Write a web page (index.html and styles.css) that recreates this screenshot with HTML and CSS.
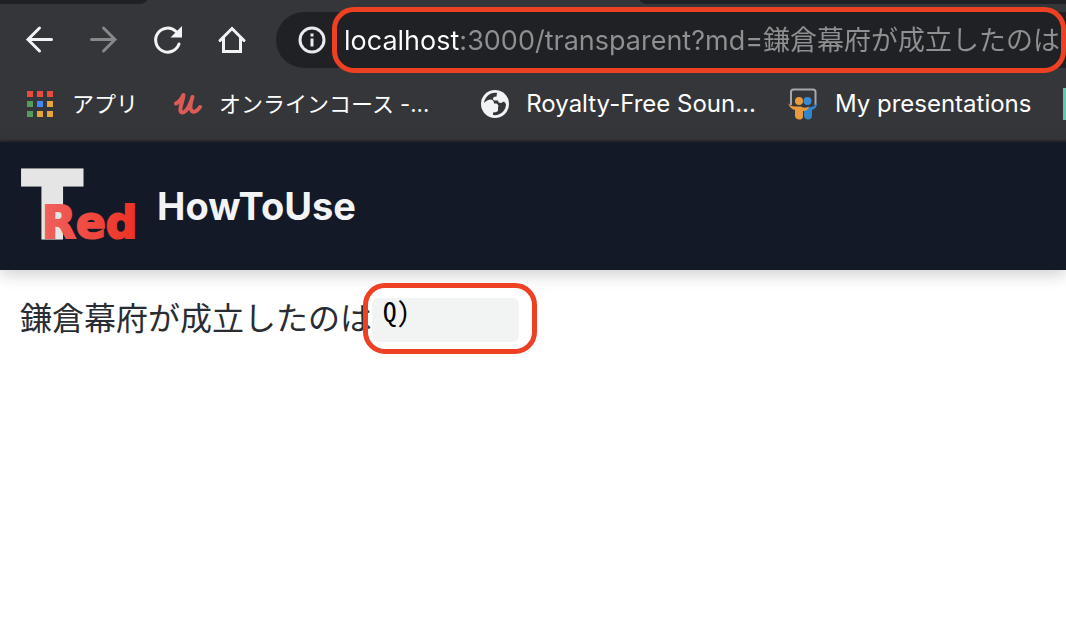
FILE: index.html
```html
<!DOCTYPE html>
<html lang="ja">
<head>
<meta charset="utf-8">
<title>HowToUse</title>
<link rel="stylesheet" href="styles.css">
</head>
<body>
<div class="browser">
  <div class="tabs"><span class="tab tab-left"></span><span class="tab tab-right"></span></div>
  <div class="toolbar">
    <button class="tool" aria-label="Back"><svg class="icon" viewBox="0 0 28 28"><path d="M25.500 13.500H2M13.500 2 2 13.500 13.500 25"/></svg></button>
    <button class="tool dim" aria-label="Forward"><svg class="icon" viewBox="0 0 28 28"><path d="M1.500 13.500H25M13.500 2 25 13.500 13.500 25"/></svg></button>
    <button class="tool" aria-label="Reload"><svg class="icon" viewBox="0 0 28 28"><path d="M25 18A12 12 0 1 1 22 5.500"/><path class="solid" d="M28 0V11.500H16.500Z"/></svg></button>
    <button class="tool" aria-label="Home"><svg class="icon" viewBox="0 0 28 28"><path d="M2 14.500 14 2.500 26 14.500M5.500 12V25.500H22.500V12"/></svg></button>
    <div class="address">
      <svg class="icon info" viewBox="0 0 28 28"><circle cx="14" cy="14" r="12"/><path class="solid" d="M12.500 7.500h3v3h-3zM12.500 12.500h3v8h-3z"/></svg>
      <div class="field marked">
        <input class="url" type="text" aria-label="Address" value="localhost:3000/transparent?md=鎌倉幕府が成立したのは">
      </div>
    </div>
  </div>
  <nav class="bookmarks">
    <a class="bookmark apps-link" href="#">
      <span class="apps"><i class="red"></i><i class="red"></i><i class="red"></i><i class="green"></i><i class="blue"></i><i class="amber"></i><i class="green"></i><i class="amber"></i><i class="amber"></i></span>アプリ</a>
    <a class="bookmark course-link" href="#">
      <svg class="favicon" viewBox="0 0 28 28"><path class="script-u" d="M2 13.500C5 12 8 8 9.500 5 9 11 5.500 17 6.500 21 8 25 14 22 18.500 7 16 15 15.500 20 18.500 21.500 21.500 22.500 24 20 26 17"/></svg>オンラインコース -...</a>
    <a class="bookmark sound-link" href="#">
      <svg class="favicon" viewBox="0 0 28 28"><circle cx="14" cy="14" r="14" fill="#f1f3f4"/><path fill="#35363a" d="M16 3C9 2 4 7 3 13H10Q14 13 14 17H17V20.500Q17 22 12 22.500V25C19 26 25 21 25 14L23 11.500 20 13Q17 13 17 10.500H13.500Q12 10.500 12 8.500 12 6.500 15.500 6.500Z"/><path fill="#f1f3f4" d="M3 13Q6 9.500 10 9.500 13 10 13 13.500H15.500Q17.500 14 17.500 17H15Q15 20 12 20V24L8 20Z"/></svg>Royalty-Free Soun...</a>
    <a class="bookmark slides-link" href="#">
      <svg class="favicon slides" viewBox="0 0 30 32"><path d="M3 17V4Q3 1.500 5.500 1.500H25Q27.500 1.500 27.500 4V17" fill="none" stroke="#a6a8ad" stroke-width="2"/><circle cx="11" cy="13" r="4" fill="#e99a3d"/><circle cx="19.500" cy="13" r="4" fill="#3a8bd0"/><path fill="#3384cc" d="M29 15C29 20 26 21 24 22V28C24 33 16 32 16 28V20L23 19Q27 18 29 15Z"/><path fill="#e99a3d" d="M0 15Q3 19 8 18.500H13Q17 21 21 18.500 20 23 15 23V29C14 33 7 32 7 28V22Q2 21 0 15Z"/></svg>My presentations</a>
    <span class="next-bookmark"></span>
  </nav>
</div>
<header class="site-header">
  <a class="logo-link" href="#" aria-label="TRed">
    <svg class="logo" viewBox="0 0 116 72">
      <defs><linearGradient id="red-fade"><stop offset="0" stop-color="#f0625f"/><stop offset="1" stop-color="#ee3023"/></linearGradient></defs>
      <text class="logo-t" x="-1" y="68">T</text>
      <text class="logo-red" x="21" y="68" fill="url(#red-fade)" stroke="url(#red-fade)">Red</text>
    </svg>
  </a>
  <a class="site-title" href="#">HowToUse</a>
</header>
<main class="content">
  <label class="question" for="answer">鎌倉幕府が成立したのは</label>
  <div class="answer-wrap marked"><input class="answer" id="answer" type="text" value="Q)"></div>
</main>
</body>
</html>
```
FILE: styles.css
```css
* { box-sizing: border-box; }
body {
  margin: 0;
  background: #fff;
  color: #292d33;
  font-family: Inter, "Noto Sans CJK JP", sans-serif;
  overflow-x: hidden;
}
a { color: inherit; text-decoration: none; }
input { border: 0; outline: 0; padding: 0; min-width: 0; }

.browser {
  background: #35363a;
  border-bottom: 2px solid #29292d;
  color: #fff;
  overflow: hidden;
}
.tabs { display: flex; justify-content: space-between; height: 4px; }
.tab { background: #202124; }
.tab-left { width: 147px; border-bottom-right-radius: 8px 4px; }
.tab-right { width: 40%; border-bottom-left-radius: 8px 4px; }
.toolbar {
  display: flex;
  align-items: center;
  gap: 36px;
  height: 72px;
  padding-left: 26px;
}
.tool {
  display: flex;
  padding: 0;
  border: 0;
  background: none;
  color: #f1f3f4;
}
.dim { color: #87888a; }
.icon {
  width: 28px;
  height: 28px;
  fill: none;
  stroke: currentColor;
  stroke-width: 3;
  stroke-linecap: round;
  overflow: visible;
}
.icon .solid { fill: currentColor; stroke: none; }
.address {
  display: flex;
  align-items: center;
  flex: 1;
  height: 56px;
  margin-left: -6px;
  padding-left: 22px;
  border-radius: 28px 0 0 28px;
  background: #202124;
}
.info { flex: none; color: #e8eaed; }
.marked { border: 5px solid #ee4023; }
.field {
  flex: 1;
  height: 66px;
  margin-left: 6px;
  padding-left: 7px;
  border-radius: 22px;
  min-width: 0;
}
.url {
  width: 100%;
  height: 52px;
  background: linear-gradient(90deg, #fff 116px, #8f9092 116px);
  background-clip: text;
  -webkit-background-clip: text;
  color: transparent;
  font: 27px Inter, "Noto Sans CJK JP", sans-serif;
}
.bookmarks {
  display: flex;
  align-items: center;
  height: 64px;
  padding: 0 0 8px 27px;
  font-size: 24px;
  line-height: 32px;
  white-space: nowrap;
}
.bookmark { display: flex; align-items: center; gap: 17px; margin-right: 32px; }
.apps-link, .course-link { font-size: 22px; }
.apps-link { gap: 19px; margin-right: 36px; }
.course-link { margin-right: 52px; }
.favicon { width: 28px; height: 28px; flex: none; }
.slides { width: 30px; height: 32px; }
.script-u { fill: none; stroke: #dc5b56; stroke-width: 4; stroke-linecap: round; stroke-linejoin: round; }
.apps { display: grid; grid-template-columns: repeat(3, 6px); gap: 4px; }
.apps i { height: 6px; }
.red { background: #e84c3d; }
.green { background: #559c5c; }
.blue { background: #4388f0; }
.amber { background: #e9a53a; }
.next-bookmark { flex: none; width: 28px; height: 32px; background: #68c5b2; }

.site-header {
  display: flex;
  align-items: center;
  gap: 20px;
  height: 128px;
  padding-left: 21px;
  background: #131926;
  box-shadow: 0 4px 16px rgba(0, 0, 0, .2);
}
.logo-link { display: flex; }
.logo { width: 116px; height: 72px; overflow: visible; }
.logo-t { font: 900 94px Inter, sans-serif; fill: #e5e5e5; stroke: #e5e5e5; stroke-width: 3; }
.logo-red { font: bold 44px "DejaVu Sans", sans-serif; stroke-width: 2; }
.site-title { color: #f3f4f6; font-size: 38px; font-weight: 700; }

.content { display: flex; align-items: center; padding: 13px 20px; }
.question { padding-bottom: 6px; font: 32px "Noto Sans CJK JP", sans-serif; white-space: nowrap; }
.answer-wrap {
  height: 71px;
  width: 174px;
  margin-left: -9px;
  padding: 10px 13px 7px 4px;
  border-radius: 22px;
}
.answer {
  display: block;
  width: 100%;
  height: 44px;
  padding: 0 0 20px 11px;
  border-radius: 6px;
  background: #f2f4f4;
  color: #000;
  font: 27px/24px "Noto Sans CJK JP", monospace;
  font-feature-settings: "hwid";
}
```
